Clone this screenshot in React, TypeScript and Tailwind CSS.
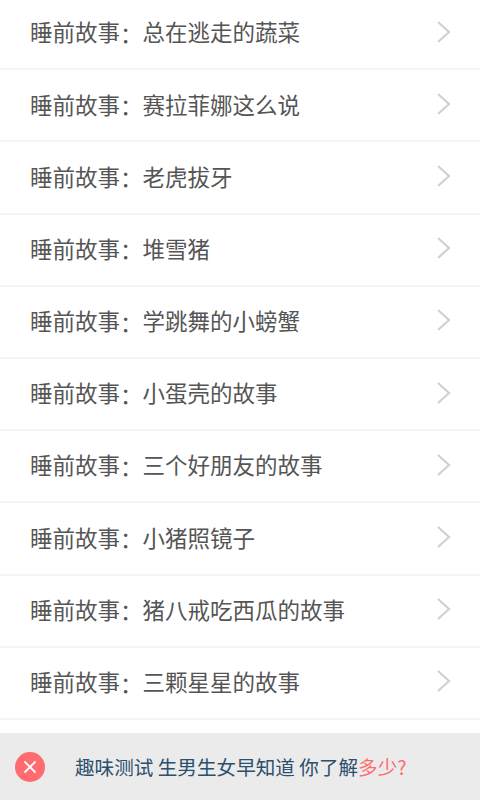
const titles = [
  "总在逃走的蔬菜",
  "赛拉菲娜这么说",
  "老虎拔牙",
  "堆雪猪",
  "学跳舞的小螃蟹",
  "小蛋壳的故事",
  "三个好朋友的故事",
  "小猪照镜子",
  "猪八戒吃西瓜的故事",
  "三颗星星的故事",
];

const cjk = { fontFamily: '"Noto Sans CJK SC", sans-serif' };

export default function App() {
  return (
    <div className="relative h-[800px] w-[480px] overflow-hidden bg-white" style={cjk}>
      <ul className="-mt-[2px]">
        {titles.map((t) => (
          <li
            key={t}
            className="flex h-[72.2px] items-center justify-between border-b-2 border-[#f5f5f5] pb-[3px] pl-[30px] pr-[28px]"
          >
            <span className="text-[22.5px] leading-none text-[#555555]">
              睡前故事<span className="relative top-[1.5px]">：</span>{t}
            </span>
            <svg width="16" height="24" viewBox="0 0 16 24" fill="none" className="text-[#d0d0d0]">
              <path d="M2 2l11 10L2 22" stroke="currentColor" strokeWidth="2.2" />
            </svg>
          </li>
        ))}
      </ul>

      {/* bottom ad banner */}
      <div className="absolute inset-x-0 bottom-0 flex h-[67px] items-center bg-[#ebebeb] pl-[15px]">
        <div className="flex h-[30px] w-[30px] items-center justify-center rounded-full bg-[#ff6b6f]">
          <svg width="14" height="14" viewBox="0 0 14 14" fill="none">
            <path d="M1.5 1.5l11 11M12.5 1.5l-11 11" stroke="white" strokeWidth="1.8" />
          </svg>
        </div>
        <span className="ml-[30px] whitespace-pre text-[19.6px] leading-none text-[#2b4f6e]">
          趣味测试 生男生女早知道 你了解<span className="text-[#ff6b6f]">多少?</span>
        </span>
      </div>
    </div>
  );
}
